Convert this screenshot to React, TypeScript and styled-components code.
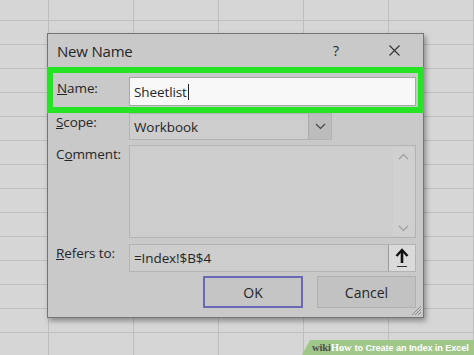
import React from "react";
import styled, { createGlobalStyle } from "styled-components";

const GlobalStyle = createGlobalStyle`
	html, body {
		margin: 0;
		padding: 0;
	}
	body {
		font-family: "Open Sans", "Noto Sans", sans-serif;
		color: #262626;
	}
`;

const Sheet = styled.div`
	position: relative;
	width: 474px;
	height: 355px;
	overflow: hidden;
	box-sizing: border-box;
	padding: 33px 0 0 47px;
	background-color: #d6d6d6;
	background-image: linear-gradient(#bebebe 1px, transparent 1px),
		linear-gradient(90deg, #bebebe 1px, transparent 1px);
	background-size: 85px 24px;
	background-position: 48px 20px;
`;

const Dialog = styled.div`
	position: relative;
	width: 377px;
	height: 285px;
	box-sizing: border-box;
	background: #c9c9c9;
	border: 1px solid #757575;
	box-shadow: 2px 3px 5px rgba(0, 0, 0, 0.35);
	display: flex;
	flex-direction: column;
`;

const TitleBar = styled.div`
	height: 33px;
	display: flex;
	align-items: center;
	padding: 0 19px 0 9px;
`;

const Title = styled.div`
	font-size: 15px;
	letter-spacing: -0.2px;
`;

const TitleButtons = styled.div`
	margin-left: auto;
	display: flex;
	align-items: center;
	gap: 38px;
`;

const TitleButton = styled.div`
	width: 20px;
	height: 20px;
	display: flex;
	align-items: center;
	justify-content: center;
	font-size: 14px;
`;

const Highlight = styled.div`
	margin: 0 -1px;
	height: 46px;
	box-sizing: border-box;
	border: 6px solid #25e425;
	padding: 4px 2px 1px 4px;
	display: grid;
	grid-template-columns: 72px 1fr;
`;

const Body = styled.div`
	padding: 0 7px 0 8px;
	display: flex;
	flex-direction: column;
`;

const Row = styled.div<{ $gap?: number }>`
	display: grid;
	grid-template-columns: 73px 1fr;
	margin-top: ${(p) => p.$gap ?? 0}px;
`;

const Label = styled.div<{ $top?: number }>`
	font-size: 13.5px;
	line-height: 18px;
	padding-top: ${(p) => p.$top ?? 0}px;
	letter-spacing: -0.1px;
`;

const Field = styled.div<{ $bg?: string; $h: number }>`
	height: ${(p) => p.$h}px;
	box-sizing: border-box;
	background: ${(p) => p.$bg ?? "#cdcdcd"};
	border: 1px solid #b3b3b3;
	display: flex;
	align-items: center;
	font-size: 13.5px;
	padding-left: 4px;
	letter-spacing: -0.1px;
`;

const NameInput = styled(Field)`
	background: #f8f8f8;
	border-color: #a8a8a8;
`;

const Caret = styled.span`
	display: inline-block;
	width: 1px;
	height: 16px;
	background: #222;
	margin-left: 1px;
`;

const Select = styled(Field)`
	width: 203px;
	padding-right: 0;
`;

const SelectText = styled.div`
	flex: 1;
`;

const DropButton = styled.div`
	width: 22px;
	height: 100%;
	background: #bcbcbc;
	border-left: 1px solid #aaaaaa;
	display: flex;
	align-items: center;
	justify-content: center;
`;

const CommentBox = styled(Field)`
	align-items: stretch;
	justify-content: flex-end;
	padding: 1px 2px 1px 0;
`;

const ScrollBar = styled.div`
	width: 20px;
	background: #d0d0d0;
	display: flex;
	flex-direction: column;
	justify-content: space-between;
	align-items: center;
	padding: 6px 0 4px;
`;

const RefersBox = styled(Field)`
	padding-right: 0;
`;

const PickButton = styled.div`
	width: 27px;
	height: 100%;
	box-sizing: border-box;
	background: #dadada;
	border-left: 1px solid #9a9a9a;
	display: flex;
	align-items: center;
	justify-content: center;
`;

const Buttons = styled.div`
	margin-top: 4px;
	display: flex;
	justify-content: flex-end;
	gap: 14px;
`;

const Button = styled.div<{ $primary?: boolean }>`
	width: ${(p) => (p.$primary ? 100 : 99)}px;
	height: 32px;
	box-sizing: border-box;
	background: ${(p) => (p.$primary ? "#c5c5c5" : "#c2c2c2")};
	border: ${(p) => (p.$primary ? "2px solid #6a6ab4" : "1px solid #b0b0b0")};
	display: flex;
	align-items: center;
	justify-content: center;
	font-size: 14px;
`;

const Grip = styled.svg`
	position: absolute;
	right: 1px;
	bottom: 1px;
`;

const Watermark = styled.div`
	position: absolute;
	right: 0;
	bottom: 0;
	width: 172px;
	height: 15px;
	background: #a0c68a;
	clip-path: polygon(8px 0, 100% 0, 100% 100%, 0 100%);
	display: flex;
	align-items: center;
	padding-left: 10px;
	box-sizing: border-box;
	font-family: "Liberation Sans", Arial, sans-serif;
	font-size: 9.2px;
	font-weight: bold;
	color: #ffffff;
	white-space: nowrap;
	letter-spacing: -0.1px;
`;

const Wiki = styled.span`
	color: #4d4d4d;
	font-family: "Liberation Serif", serif;
	font-size: 10.5px;
`;

const How = styled.span`
	font-family: "Liberation Serif", serif;
	font-size: 10.5px;
	margin-right: 3px;
`;

function Chevron({ up, color = "#555" }: { up?: boolean; color?: string }) {
	return (
		<svg width="11" height="7" viewBox="0 0 11 7">
			<path d={up ? "M1 6 L5.5 1.5 L10 6" : "M1 1 L5.5 5.5 L10 1"} fill="none" stroke={color} strokeWidth="1.2" />
		</svg>
	);
}

export default function App() {
	return (
		<>
			<GlobalStyle />
			<Sheet>
				<Dialog>
					<TitleBar>
						<Title>New Name</Title>
						<TitleButtons>
							<TitleButton>?</TitleButton>
							<TitleButton>
								<svg width="11" height="11" viewBox="0 0 11 11">
									<path d="M0.5 0.5 L10.5 10.5 M10.5 0.5 L0.5 10.5" stroke="#333" strokeWidth="1.1" />
								</svg>
							</TitleButton>
						</TitleButtons>
					</TitleBar>

					<Highlight>
						<Label $top={2}>
							<u>N</u>ame:
						</Label>
						<NameInput $h={29}>
							Sheetlist
							<Caret />
						</NameInput>
					</Highlight>

					<Body>
						<Row>
							<Label>
								<u>S</u>cope:
							</Label>
							<Select $h={27}>
								<SelectText>Workbook</SelectText>
								<DropButton>
									<Chevron color="#444" />
								</DropButton>
							</Select>
						</Row>

						<Row $gap={5}>
							<Label>
								C<u>o</u>mment:
							</Label>
							<CommentBox $h={93}>
								<ScrollBar>
									<Chevron up color="#9c9c9c" />
									<Chevron color="#9c9c9c" />
								</ScrollBar>
							</CommentBox>
						</Row>

						<Row $gap={6}>
							<Label>
								<u>R</u>efers to:
							</Label>
							<RefersBox $h={28}>
								<SelectText>=Index!$B$4</SelectText>
								<PickButton>
									<svg width="14" height="20" viewBox="0 0 14 20">
										<path d="M7 2 L7 15" stroke="#111" strokeWidth="2.6" />
										<path d="M1.5 8 L7 2 L12.5 8" fill="none" stroke="#111" strokeWidth="2.4" />
										<path d="M2 18.5 L12 18.5" stroke="#333" strokeWidth="1" />
									</svg>
								</PickButton>
							</RefersBox>
						</Row>

						<Buttons>
							<Button $primary>OK</Button>
							<Button>Cancel</Button>
						</Buttons>
					</Body>

					<Grip width="12" height="12" viewBox="0 0 12 12">
						<path d="M11 2 L2 11 M11 5 L5 11 M11 8 L8 11" stroke="#8a8a8a" strokeWidth="1" />
					</Grip>
				</Dialog>

				<Watermark>
					<Wiki>wiki</Wiki>
					<How>How</How>
					to Create an Index in Excel
				</Watermark>
			</Sheet>
		</>
	);
}
